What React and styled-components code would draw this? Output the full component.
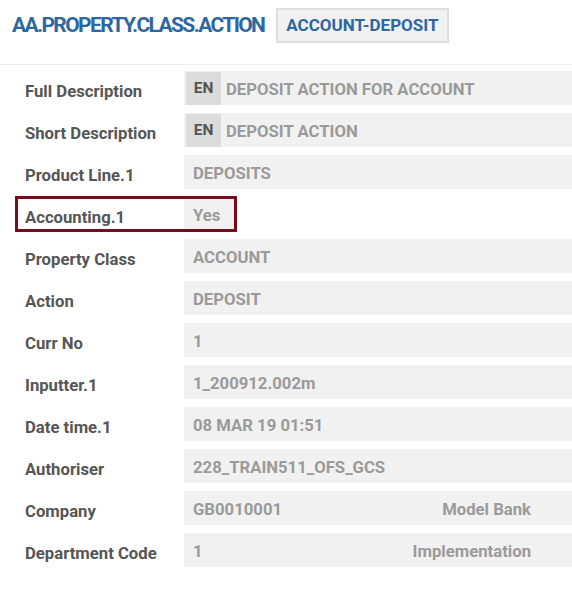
import React from 'react'
import styled, {createGlobalStyle} from 'styled-components'

const GlobalStyle = createGlobalStyle`
  body {
    margin: 0;
    background: #fff;
    font-family: Roboto, "Liberation Sans", sans-serif;
  }
`

const Page = styled.div`
  width: 572px;
  overflow: hidden;
`
const Header = styled.header`
  display: flex;
  align-items: center;
  gap: 12px;
  height: 65px;
  padding: 0 0 14px 12px;
  box-sizing: border-box;
  border-bottom: 1px solid #ececec;
`
const Title = styled.h1`
  margin: 0;
  font-size: 21px;
  font-weight: 700;
  color: #2c67a2;
  letter-spacing: -1.62px;
`
const Badge = styled.div`
  height: 35px;
  box-sizing: border-box;
  display: flex;
  align-items: center;
  padding: 0 8px;
  background: #f1f1f1;
  border: 2px solid #dedede;
  color: #2c67a2;
  font-size: 17px;
  font-weight: 700;
`
const List = styled.div`
  padding-top: 6px;
`
const Row = styled.div`
  position: relative;
  display: grid;
  grid-template-columns: 159px 1fr;
  align-items: center;
  height: 34px;
  margin-bottom: 8px;
  padding-left: 25px;

  ${p => p.$highlight && `
    &::after {
      content: '';
      position: absolute;
      left: 15px;
      top: -1px;
      width: 222px;
      height: 36px;
      box-sizing: border-box;
      border: 3px solid #7b0a1c;
      pointer-events: none;
    }
  `}
`
const Label = styled.div`
  font-size: 16.7px;
  font-weight: 700;
  color: #565656;
  padding-top: 7px;
  white-space: nowrap;
`
const Field = styled.div`
  display: flex;
  align-items: center;
  height: 34px;
  background: #f1f1f1;
  width: ${p => (p.$fit ? 'fit-content' : 'auto')};
  padding: 2px ${p => (p.$fit ? '14px' : '41px')} 0 ${p => (p.$lang ? '2px' : '9px')};
  font-size: 16.7px;
  font-weight: 700;
  color: #9a9a9a;
  white-space: nowrap;
  box-sizing: border-box;
`
const Lang = styled.span`
  display: flex;
  align-items: flex-start;
  justify-content: center;
  width: 35px;
  height: 33px;
  margin-top: -2px;
  padding-top: 7px;
  box-sizing: border-box;
  margin-right: 5px;
  background: #dcdcdc;
  color: #555;
  font-size: 15.5px;
`
const Extra = styled.span`
  margin-left: auto;
`

const rows = [
  {label: 'Full Description', value: 'DEPOSIT ACTION FOR ACCOUNT', lang: 'EN'},
  {label: 'Short Description', value: 'DEPOSIT ACTION', lang: 'EN'},
  {label: 'Product Line.1', value: 'DEPOSITS'},
  {label: 'Accounting.1', value: 'Yes', fit: true, highlight: true},
  {label: 'Property Class', value: 'ACCOUNT'},
  {label: 'Action', value: 'DEPOSIT'},
  {label: 'Curr No', value: '1'},
  {label: 'Inputter.1', value: '1_200912.002m'},
  {label: 'Date time.1', value: '08 MAR 19 01:51'},
  {label: 'Authoriser', value: '228_TRAIN511_OFS_GCS'},
  {label: 'Company', value: 'GB0010001', extra: 'Model Bank'},
  {label: 'Department Code', value: '1', extra: 'Implementation'},
]

const App = () => (
  <Page>
    <GlobalStyle />
    <Header>
      <Title>AA.PROPERTY.CLASS.ACTION</Title>
      <Badge>ACCOUNT-DEPOSIT</Badge>
    </Header>
    <List>
      {rows.map(r => (
        <Row key={r.label} $highlight={r.highlight}>
          <Label>{r.label}</Label>
          <Field $fit={r.fit} $lang={!!r.lang}>
            {r.lang && <Lang>{r.lang}</Lang>}
            <span>{r.value}</span>
            {r.extra && <Extra>{r.extra}</Extra>}
          </Field>
        </Row>
      ))}
    </List>
  </Page>
)

export default App
